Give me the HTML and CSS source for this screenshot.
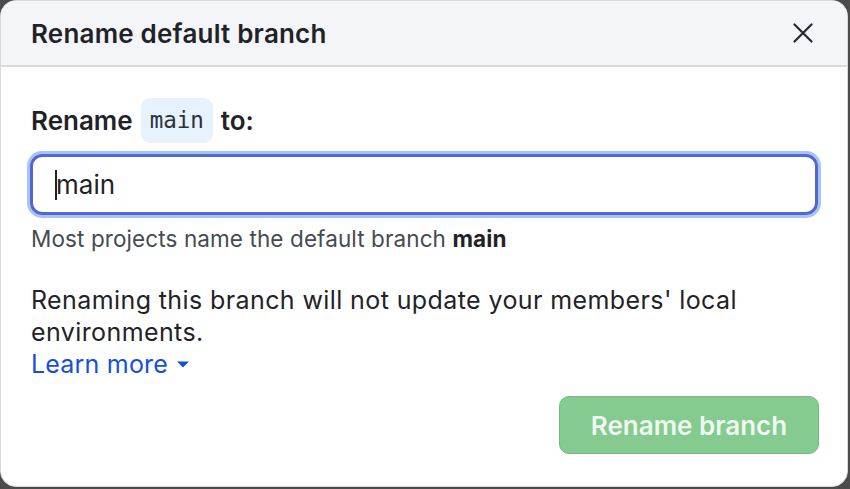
FILE: index.html
```html
<!DOCTYPE html>
<html>
<head>
<meta charset="utf-8">
<link rel="stylesheet" href="styles.css">
</head>
<body>
<div class="dialog">
  <div class="header">
    <h1 class="title">Rename default branch</h1>
    <button class="close" aria-label="Close">
      <svg width="20" height="20" viewBox="0 0 20 20"><path d="M1.5 1.5L18.5 18.5M18.5 1.5L1.5 18.5" stroke="#24292f" stroke-width="2.2" stroke-linecap="round"/></svg>
    </button>
  </div>
  <div class="body">
    <label class="label">Rename <code class="chip">main</code> to:</label>
    <div class="input"><span class="caret"></span>main</div>
    <p class="hint">Most projects name the default branch <strong>main</strong></p>
    <p class="note">Renaming this branch will not update your members' local environments.</p>
    <a class="learn">Learn more <svg width="14" height="12" viewBox="0 0 14 12"><path d="M1 3.5h12L7 9.5z" fill="currentColor"/></svg></a>
    <div class="actions">
      <button class="primary">Rename branch</button>
    </div>
  </div>
</div>
</body>
</html>
```

FILE: styles.css
```css
* { box-sizing: border-box; }
html, body { margin: 0; padding: 0; }
body {
  background: #4b4b4b;
  width: 850px;
  height: 489px;
  font-family: Inter, "Liberation Sans", sans-serif;
  color: #1f2328;
  overflow: hidden;
}
.dialog {
  width: 848px;
  height: 487px;
  background: #fff;
  border: 1px solid #d6dade;
  border-radius: 16px;
  overflow: hidden;
  display: flex;
  flex-direction: column;
}
.header {
  height: 66px;
  background: #f3f5f8;
  border-bottom: 2px solid #d8dce0;
  display: flex;
  align-items: center;
  justify-content: space-between;
  padding: 0 34px 0 30px;
}
.title {
  margin: 0;
  font-size: 26px;
  font-weight: 600;
  letter-spacing: 0.2px;
}
.close {
  border: 0;
  background: transparent;
  padding: 0;
  width: 20px;
  height: 20px;
  display: flex;
}
.body {
  padding: 30px 30px 0 30px;
  display: flex;
  flex-direction: column;
  align-items: flex-start;
}
.label {
  font-size: 26px;
  font-weight: 600;
  display: flex;
  align-items: center;
  gap: 8px;
  height: 46px;
}
.chip {
  font-family: "DejaVu Sans Mono", monospace;
  font-weight: 400;
  font-size: 22.5px;
  background: #e6f2fe;
  color: #2b3137;
  border-radius: 9px;
  padding: 9px 9px 9px 9px;
  line-height: 27px;
}
.input {
  margin-top: 11px;
  align-self: stretch;
  margin-right: -1px;
  margin-left: -1px;
  height: 61px;
  border: 3px solid #5266d8;
  box-shadow: 0 0 0 3px #a9c4f3;
  border-radius: 12px;
  font-size: 26px;
  display: flex;
  align-items: center;
  padding-left: 22px;
  color: #1f2328;
}
.caret {
  width: 2px;
  height: 30px;
  background: #1f2328;
  margin-right: -1px;
}
.hint {
  margin: 10px 0 0 0;
  font-size: 22.5px;
  line-height: 27px;
  color: #444b53;
  letter-spacing: 0.1px;
}
.hint strong { color: #1f2328; font-weight: 700; }
.note {
  margin: 32px 0 0 0;
  font-size: 25px;
  line-height: 32px;
  letter-spacing: 0.4px;
}
.learn {
  font-size: 25px;
  line-height: 32px;
  color: #1450dc;
  display: flex;
  align-items: center;
  gap: 8px;
  letter-spacing: 0.2px;
}
.actions {
  align-self: stretch;
  display: flex;
  justify-content: flex-end;
  margin-top: 16px;
}
.primary {
  width: 260px;
  height: 58px;
  margin-right: -2px;
  background: #85ca8f;
  border: 1px solid #78b983;
  border-radius: 10px;
  color: #eef8f0;
  font-family: Inter, "Liberation Sans", sans-serif;
  font-size: 26px;
  font-weight: 600;
}
```
